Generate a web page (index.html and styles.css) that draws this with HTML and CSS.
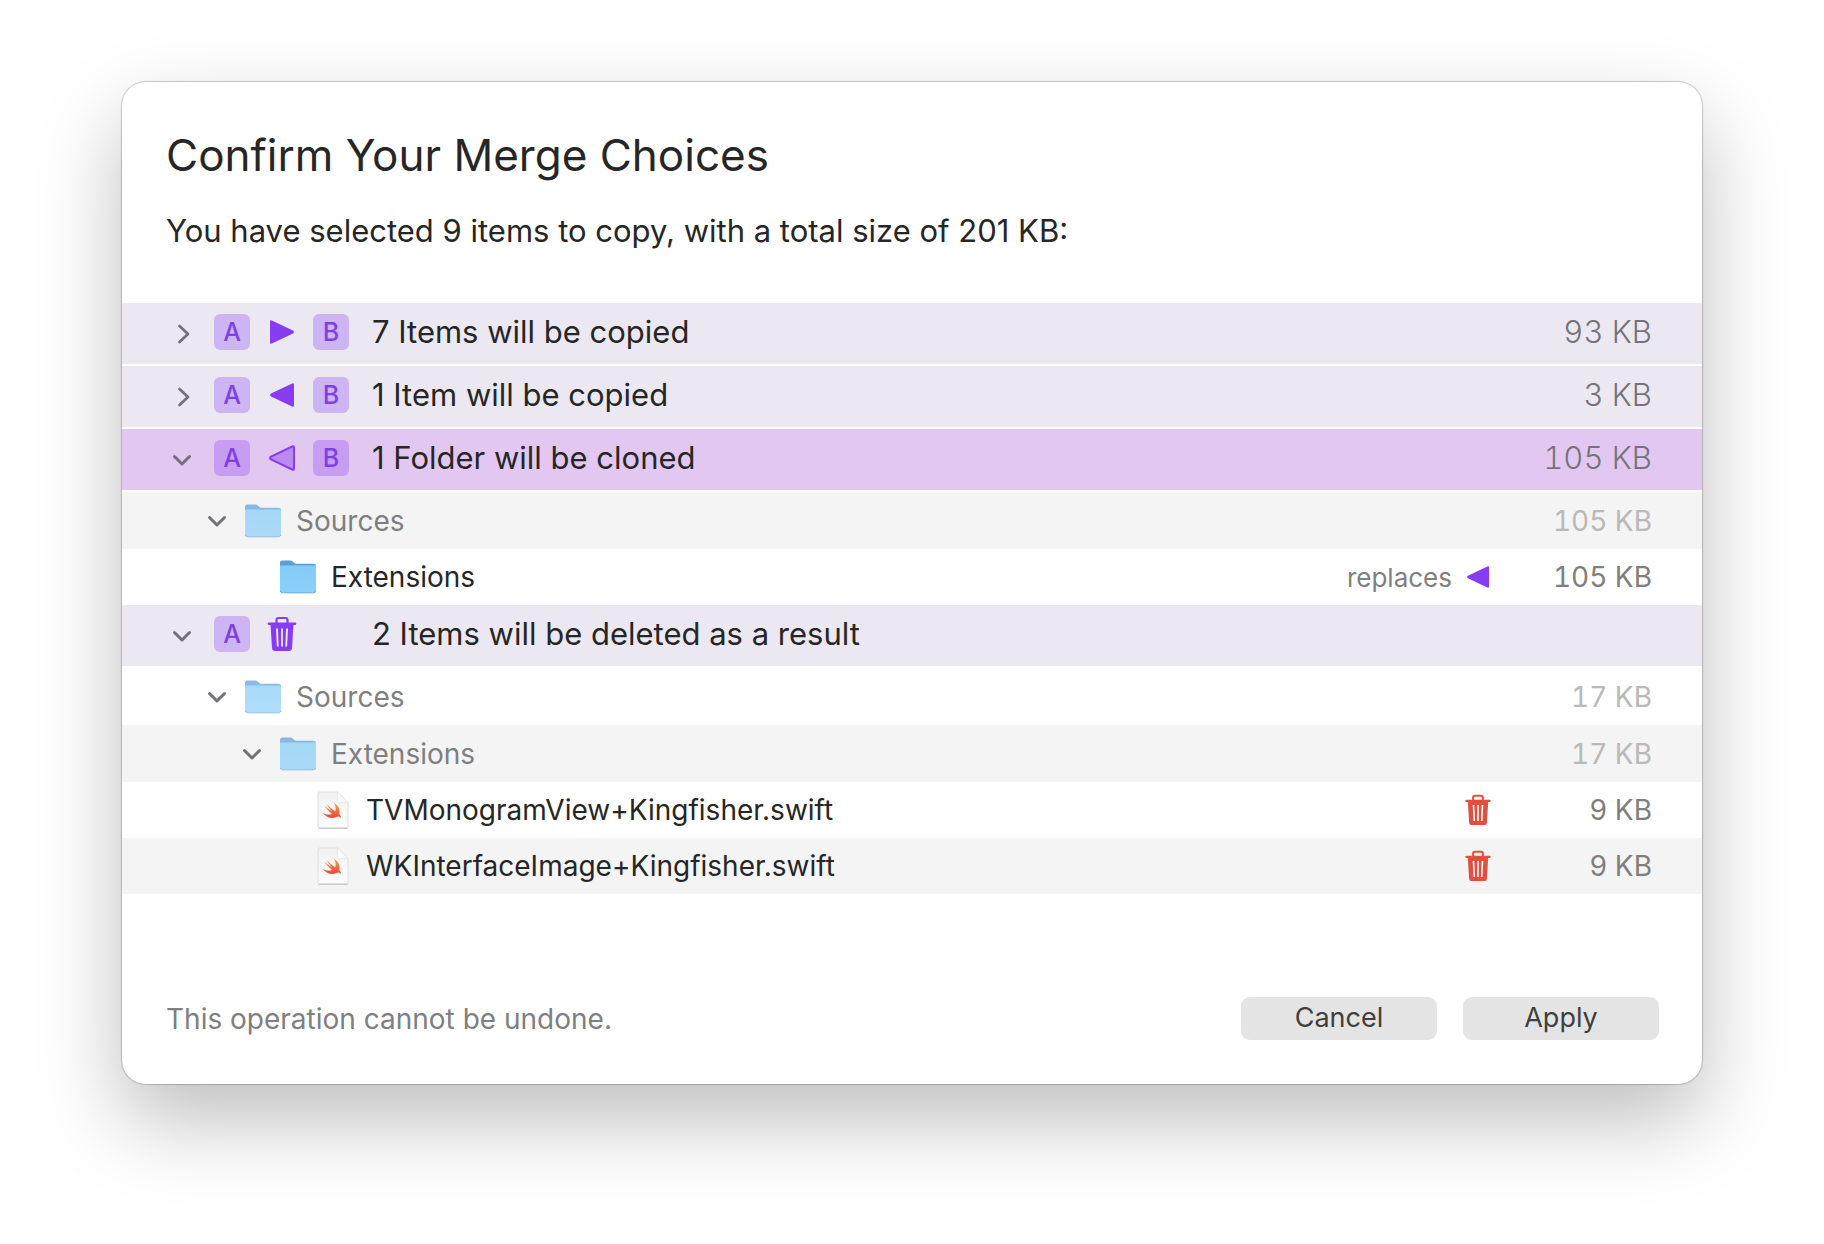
FILE: index.html
```html
<!DOCTYPE html>
<html lang="en">
<head>
<meta charset="utf-8">
<title>Confirm Your Merge Choices</title>
<link rel="stylesheet" href="styles.css">
</head>
<body>
<svg class="defs" aria-hidden="true">
  <defs>
    <linearGradient id="folder-front" x1="0" y1="0" x2="0" y2="1">
      <stop offset="0" stop-color="#84cbf8"/>
      <stop offset="1" stop-color="#8bd0fa"/>
    </linearGradient>
    <linearGradient id="swift-fill" x1="0" y1="0" x2="0" y2="1">
      <stop offset="0" stop-color="#f5a45c"/>
      <stop offset="1" stop-color="#e5493a"/>
    </linearGradient>
    <linearGradient id="page-fill" x1="0" y1="0" x2="0" y2="1">
      <stop offset="0" stop-color="#f1f1f1"/>
      <stop offset="1" stop-color="#fdfdfd"/>
    </linearGradient>
  </defs>
  <symbol id="chevron-right" viewBox="0 0 20 20"><path d="M7.500 2 L16 10 L7.500 18" fill="none" stroke="currentColor" stroke-width="2.800" stroke-linecap="round" stroke-linejoin="round"/></symbol>
  <symbol id="chevron-down" viewBox="0 0 20 20"><path d="M2.500 6.500 L10 14 L17.500 6.500" fill="none" stroke="currentColor" stroke-width="3" stroke-linecap="round" stroke-linejoin="round"/></symbol>
  <symbol id="triangle" viewBox="0 0 26 26"><path d="M1 2.600 Q1 0.700 2.800 1.500 L24 11.600 Q26 13 24 14.400 L2.800 24.500 Q1 25.300 1 23.400 Z"/></symbol>
  <symbol id="trash" viewBox="0 0 30 36">
    <path d="M9.500 7 V4 Q9.500 2 11.500 2 H18.500 Q20.500 2 20.500 4 V7" fill="none" stroke="currentColor" stroke-width="2.200"/>
    <path d="M2 7.700 H28" stroke="currentColor" stroke-width="2.600" stroke-linecap="round"/>
    <path fill="currentColor" fill-rule="evenodd" d="M3.500 8 H26.500 L25 32 Q24.700 35 21.700 35 H8.300 Q5.300 35 5 32 Z M9 12.500 L9.900 30.500 H11.700 L10.900 12.500 Z M14.100 12.500 V30.500 H15.900 V12.500 Z M19.100 12.500 L18.300 30.500 H20.100 L21 12.500 Z"/>
  </symbol>
  <symbol id="folder" viewBox="0 0 38 36">
    <path d="M1 6 V4 Q1 1.500 3.500 1.500 H11 Q12.800 1.500 14 2.700 L15.300 4 Q16 4.700 17.200 4.700 H34.500 Q37 4.700 37 7.200 V12 H1 Z" fill="#5b9fd4"/>
    <path d="M1 7.600 Q1 6.400 2.200 6.400 H35.800 Q37 6.400 37 7.600 V31.200 Q37 33.600 34.600 33.600 H3.400 Q1 33.600 1 31.200 Z" fill="url(#folder-front)"/>
    <path d="M1.300 32 Q1.800 33.800 3.400 33.800 H34.600 Q36.200 33.800 36.700 32" fill="none" stroke="#5fa6d6" stroke-width="1"/>
  </symbol>
  <symbol id="swift-file" viewBox="0 0 34 40">
    <path d="M2 3.500 Q2 2 3.500 2 H21.500 L32 12.500 V36.500 Q32 38 30.500 38 H3.500 Q2 38 2 36.500 Z" fill="url(#page-fill)" stroke="#dedede" stroke-width="1"/>
    <path d="M2.500 38.300 H31.500" stroke="#c4c4c4" stroke-width="1.200"/>
    <path d="M21.500 2 V11 Q21.500 12.500 23 12.500 H32 Z" fill="#fcfcfc" stroke="#e4e4e4" stroke-width="0.800"/>
    <path transform="translate(6 11.500)" d="M11.800 1 C17 4.600 18.300 9 17.300 12.300 C19 14.300 19 15.800 18.500 16.500 C17 14.500 15.500 15 14.500 15.500 C9.500 18 3.500 15.600 0.800 11.200 C4 13.300 7.500 13.600 9.800 12.200 C6.500 9.600 4 6.600 2.200 4 C5 6.400 7.600 8.300 9.600 9.400 C7.800 7.500 5.800 5 4.400 2.500 C7.300 5.400 10.500 8.100 13.300 9.800 C14.200 7.200 13.500 3.800 11.800 1 Z" fill="url(#swift-fill)"/>
  </symbol>
</svg>

<main class="dialog" role="dialog" aria-labelledby="dialog-title">
  <header class="dialog-header">
    <h1 id="dialog-title">Confirm Your Merge Choices</h1>
    <p>You have selected 9 items to copy, with a total size of 201 KB:</p>
  </header>

  <table class="changes">
    <tbody>
      <tr class="group">
        <td><div class="name"><button class="toggle" aria-label="Expand"><svg><use href="#chevron-right"/></svg></button><span class="route"><span class="badge">A</span><svg class="arrow"><use href="#triangle"/></svg><span class="badge">B</span></span>7 Items will be copied</div></td>
        <td></td>
        <td class="size">93 KB</td>
      </tr>
      <tr class="group">
        <td><div class="name"><button class="toggle" aria-label="Expand"><svg><use href="#chevron-right"/></svg></button><span class="route"><span class="badge">A</span><svg class="arrow left"><use href="#triangle"/></svg><span class="badge">B</span></span>1 Item will be copied</div></td>
        <td></td>
        <td class="size">3 KB</td>
      </tr>
      <tr class="group selected">
        <td><div class="name"><button class="toggle" aria-label="Collapse"><svg><use href="#chevron-down"/></svg></button><span class="route"><span class="badge">A</span><svg class="arrow left outlined"><use href="#triangle"/></svg><span class="badge">B</span></span>1 Folder will be cloned</div></td>
        <td></td>
        <td class="size">105 KB</td>
      </tr>
      <tr class="parent striped">
        <td><div class="name level-1"><button class="toggle" aria-label="Collapse"><svg><use href="#chevron-down"/></svg></button><svg class="folder"><use href="#folder"/></svg>Sources</div></td>
        <td></td>
        <td class="size">105 KB</td>
      </tr>
      <tr class="leaf">
        <td><div class="name level-2"><svg class="folder"><use href="#folder"/></svg>Extensions</div></td>
        <td><div class="action">replaces<svg class="arrow left"><use href="#triangle"/></svg></div></td>
        <td class="size">105 KB</td>
      </tr>
      <tr class="group">
        <td><div class="name"><button class="toggle" aria-label="Collapse"><svg><use href="#chevron-down"/></svg></button><span class="route"><span class="badge">A</span><svg class="trash"><use href="#trash"/></svg></span>2 Items will be deleted as a result</div></td>
        <td></td>
        <td></td>
      </tr>
      <tr class="parent">
        <td><div class="name level-1"><button class="toggle" aria-label="Collapse"><svg><use href="#chevron-down"/></svg></button><svg class="folder"><use href="#folder"/></svg>Sources</div></td>
        <td></td>
        <td class="size">17 KB</td>
      </tr>
      <tr class="parent striped">
        <td><div class="name level-2"><button class="toggle" aria-label="Collapse"><svg><use href="#chevron-down"/></svg></button><svg class="folder"><use href="#folder"/></svg>Extensions</div></td>
        <td></td>
        <td class="size">17 KB</td>
      </tr>
      <tr class="leaf">
        <td><div class="name level-3"><svg class="file"><use href="#swift-file"/></svg>TVMonogramView+Kingfisher.swift</div></td>
        <td><div class="action"><svg class="trash"><use href="#trash"/></svg></div></td>
        <td class="size">9 KB</td>
      </tr>
      <tr class="leaf striped">
        <td><div class="name level-3"><svg class="file"><use href="#swift-file"/></svg>WKInterfaceImage+Kingfisher.swift</div></td>
        <td><div class="action"><svg class="trash"><use href="#trash"/></svg></div></td>
        <td class="size">9 KB</td>
      </tr>
    </tbody>
  </table>

  <footer class="dialog-footer">
    <p>This operation cannot be undone.</p>
    <button class="push">Cancel</button>
    <button class="push">Apply</button>
  </footer>
</main>
</body>
</html>
```
FILE: styles.css
```css
* {
  box-sizing: border-box;
}

body {
  margin: 0;
  padding: 82px 122px 160px;
  background: #fff;
  color: #262626;
  font-family: Inter, "Liberation Sans", sans-serif;
}

.defs {
  position: absolute;
  width: 0;
  height: 0;
}

.dialog {
  background: #fff;
  border-radius: 24px;
  box-shadow: 0 0 1px 1px rgba(0, 0, 0, 0.2), 0 36px 84px rgba(0, 0, 0, 0.26);
}

.dialog-header {
  padding: 44px 44px 52px;
}

h1 {
  margin: 0 0 26px;
  font-size: 44px;
  font-weight: 400;
  line-height: 58px;
}

p {
  margin: 0;
}

.dialog-header p {
  font-size: 31px;
  line-height: 41px;
}

.changes {
  width: 100%;
  border-collapse: separate;
  border-spacing: 0;
  font-size: 28px;
}

td {
  padding: 0;
  white-space: nowrap;
}

.group td {
  height: 63px;
  padding-bottom: 4px;
  border-bottom: 2px solid #fff;
  background: #ebe8f2;
  font-size: 31px;
}

.group.selected td {
  background: #e2c7f1;
}

.parent td {
  height: 57px;
  color: #7f7f7f;
}

.leaf td {
  height: 56px;
}

.striped td {
  background: #f4f4f4;
}

.name,
.route,
.action {
  display: flex;
  align-items: center;
}

.name {
  padding-left: 50px;
}

.level-1 {
  padding-left: 85px;
}

.level-2 {
  padding-left: 120px;
}

.level-3 {
  padding-left: 194px;
}

.leaf .level-2 {
  padding-left: 157px;
}

.toggle {
  width: 20px;
  height: 20px;
  margin-right: 17px;
  padding: 0;
  border: 0;
  background: none;
  color: #747078;
}

.toggle svg {
  display: block;
  width: 20px;
  height: 20px;
}

.group .toggle {
  margin-top: 4px;
  margin-right: 22px;
}

.route {
  width: 158px;
  color: #873cf4;
}

.badge {
  width: 36px;
  height: 36px;
  border-radius: 6px;
  background: rgba(135, 60, 244, 0.3);
  color: #803fe6;
  font-size: 25px;
  font-weight: 500;
  line-height: 36px;
  text-align: center;
}

.arrow {
  width: 26px;
  height: 26px;
  margin: 0 18px 0 19px;
  fill: #873cf4;
}

.left {
  transform: scaleX(-1);
}

.outlined {
  fill: #b98af3;
  stroke: #873cf4;
  stroke-width: 2px;
}

.trash {
  width: 30px;
  height: 36px;
}

.route .trash {
  margin-left: 17px;
}

.folder {
  width: 38px;
  height: 36px;
  margin-right: 14px;
}

.parent .folder {
  opacity: 0.7;
}

.file {
  width: 34px;
  height: 40px;
  margin-right: 16px;
}

.action {
  justify-content: flex-end;
  color: #7f7f7f;
  font-size: 26px;
}

.action .arrow {
  width: 24px;
  height: 24px;
  margin: 0 2px 0 14px;
}

.action .trash {
  width: 28px;
  height: 32px;
  color: #e24f3f;
}

.size {
  width: 210px;
  padding-right: 50px;
  color: #7f7f7f;
  font-variant-numeric: tabular-nums;
  text-align: right;
}

.group .size {
  color: #767378;
  font-weight: 300;
}

.parent .size {
  color: #b9b9b9;
}

.dialog-footer {
  display: flex;
  align-items: center;
  gap: 26px;
  padding: 103px 43px 44px 44px;
  font-size: 28px;
}

.dialog-footer p {
  flex: 1;
  color: #7f7f7f;
}

.push {
  width: 196px;
  height: 43px;
  padding: 0 0 2px;
  border: 0;
  border-radius: 9px;
  background: #e4e4e4;
  color: #404040;
  font-family: inherit;
  font-size: 27px;
}
```
